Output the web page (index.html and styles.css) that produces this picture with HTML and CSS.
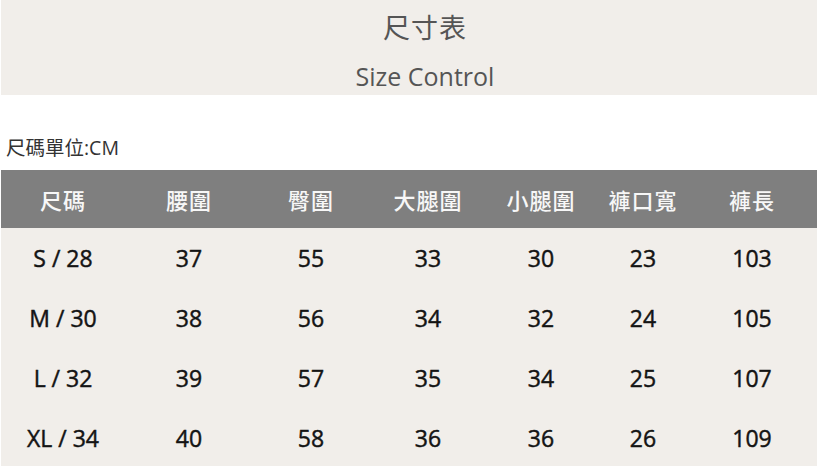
FILE: index.html
```html
<!DOCTYPE html>
<html lang="zh-Hant">
<head>
<meta charset="utf-8">
<title>尺寸表</title>
<link rel="stylesheet" href="styles.css">
</head>
<body>
<div class="page">
  <header class="banner">
    <h1 class="title">尺寸表</h1>
    <p class="subtitle">Size Control</p>
  </header>
  <p class="unit">尺碼單位:CM</p>
  <div class="table">
    <div class="row head">
      <span>尺碼</span><span>腰圍</span><span>臀圍</span><span>大腿圍</span><span>小腿圍</span><span>褲口寬</span><span>褲長</span>
    </div>
    <div class="body">
      <div class="row"><span>S / 28</span><span>37</span><span>55</span><span>33</span><span>30</span><span>23</span><span>103</span></div>
      <div class="row"><span>M / 30</span><span>38</span><span>56</span><span>34</span><span>32</span><span>24</span><span>105</span></div>
      <div class="row"><span>L / 32</span><span>39</span><span>57</span><span>35</span><span>34</span><span>25</span><span>107</span></div>
      <div class="row"><span>XL / 34</span><span>40</span><span>58</span><span>36</span><span>36</span><span>26</span><span>109</span></div>
    </div>
  </div>
</div>
</body>
</html>
```
FILE: styles.css
```css
html, body {
  margin: 0;
  padding: 0;
  background: #ffffff;
}
body {
  width: 817px;
  height: 466px;
  overflow: hidden;
  font-family: "Open Sans", "Noto Sans CJK TC", sans-serif;
}
.page {
  padding-left: 1px;
}
.banner {
  height: 95px;
  padding-left: 32px;
  background: #f1eeea;
  display: flex;
  flex-direction: column;
  align-items: center;
}
.title {
  margin: 10px 0 0;
  font-family: "Noto Sans CJK TC", sans-serif;
  font-weight: 400;
  font-size: 27px;
  line-height: 34px;
  color: #555555;
  letter-spacing: 1px;
}
.subtitle {
  margin: 15px 0 0;
  font-family: "Open Sans", sans-serif;
  font-size: 25px;
  line-height: 34px;
  color: #555555;
}
.unit {
  margin: 0;
  padding: 42px 0 0 5px;
  height: 33px;
  font-family: "Open Sans", "Noto Sans CJK TC", sans-serif;
  font-size: 19.5px;
  line-height: 22px;
  color: #333333;
}
.row {
  display: grid;
  grid-template-columns: 124px 128px 116px 118px 108px 96px 122px;
  align-items: center;
  text-align: center;
}
.head {
  height: 58px;
  background: #7f7f7f;
  color: #f7f7f7;
  font-family: "Noto Sans CJK TC", sans-serif;
  font-size: 22px;
  font-weight: 500;
  letter-spacing: 1px;
}
.body {
  background: #f1eeea;
}
.body .row {
  height: 60px;
  font-family: "Open Sans", sans-serif;
  font-size: 23px;
  font-weight: 400;
  -webkit-text-stroke: 0.45px #141414;
  color: #141414;
}
```
